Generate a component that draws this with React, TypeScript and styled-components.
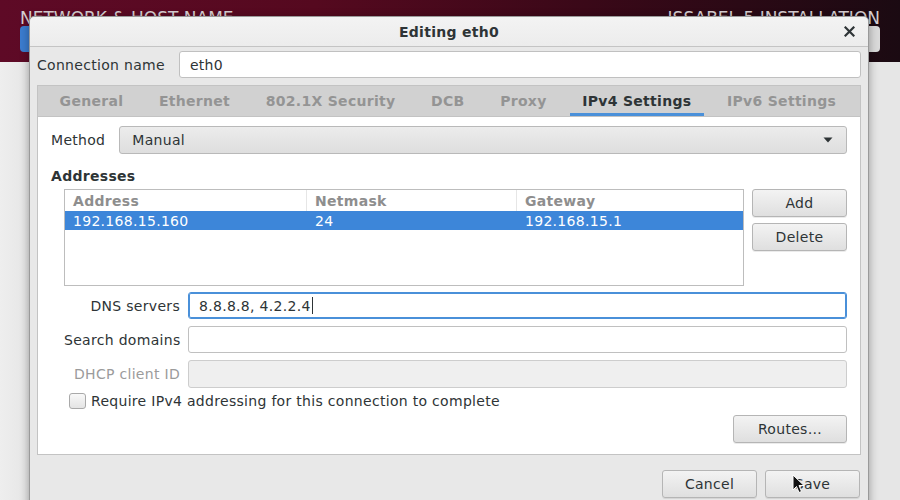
import React from "react";
import styled, { createGlobalStyle } from "styled-components";

const GlobalStyle = createGlobalStyle`
  html, body {
    margin: 0;
    padding: 0;
    width: 900px;
    height: 500px;
    overflow: hidden;
    background: #e9e9e9;
  }
  * { box-sizing: border-box; }
  body {
    font-family: "DejaVu Sans", "Liberation Sans", sans-serif;
    font-size: 14px;
    letter-spacing: 0.3px;
    color: #2e3436;
  }
`;

const Screen = styled.div`
  position: relative;
  width: 900px;
  height: 500px;
  overflow: hidden;
  background: linear-gradient(90deg, #eeeeee 0px, #e6e6e6 28px, #e6e6e6 100%);
`;

/* ---------- installer header behind the dialog ---------- */

const Header = styled.header`
  height: 62px;
  display: flex;
  justify-content: space-between;
  padding: 10px 20px 0 20px;
  background: linear-gradient(90deg, #5e0a26 0%, #55091f 35%, #3a0818 65%, #1b0a12 100%);
`;

const HeaderCol = styled.div<{ $align: "start" | "end" }>`
  display: flex;
  flex-direction: column;
  align-items: ${(p) => (p.$align === "end" ? "flex-end" : "flex-start")};
`;

const HeaderTitle = styled.div`
  font-size: 17px;
  line-height: 16px;
  height: 16px;
  color: #d6cfd2;
  letter-spacing: 0px;
  white-space: nowrap;
`;

const HeaderButton = styled.div<{ $blue?: boolean }>`
  width: 90px;
  height: 26px;
  border-radius: 4px;
  background: ${(p) => (p.$blue ? "#3b7ccf" : "#dadada")};
`;

/* ---------- dialog window ---------- */

const Dialog = styled.div`
  position: absolute;
  left: 29px;
  top: 16px;
  width: 840px;
  height: 500px;
  background: #e8e8e8;
  border: 1px solid #9a9a9a;
  border-radius: 5px 5px 0 0;
  box-shadow: 0 2px 10px rgba(0, 0, 0, 0.35);
  display: flex;
  flex-direction: column;
`;

const TitleBar = styled.div`
  position: relative;
  height: 30px;
  flex: none;
  display: flex;
  align-items: center;
  justify-content: center;
  background: linear-gradient(#f3f3f3, #ececec);
  border-bottom: 1px solid #c4c4c4;
  border-radius: 5px 5px 0 0;
  font-weight: bold;
  font-size: 14px;
`;

const CloseButton = styled.div`
  position: absolute;
  right: 13px;
  top: 9px;
  width: 11px;
  height: 11px;
  display: flex;
`;

const Body = styled.div`
  display: flex;
  flex-direction: column;
  padding: 4px 7px 0 7px;
`;

const ConnRow = styled.div`
  display: flex;
  align-items: center;
  gap: 14px;
`;

const Label = styled.span<{ $muted?: boolean }>`
  white-space: nowrap;
  color: ${(p) => (p.$muted ? "#9b9b9b" : "#2e3436")};
`;

const Entry = styled.div<{ $focused?: boolean; $disabled?: boolean; $h?: number }>`
  flex: 1;
  height: ${(p) => p.$h ?? 27}px;
  display: flex;
  align-items: center;
  padding-left: 10px;
  background: ${(p) => (p.$disabled ? "#efefef" : "#ffffff")};
  border: 1px solid ${(p) => (p.$focused ? "#4a90d9" : p.$disabled ? "#cdcdcd" : "#c0c0c0")};
  box-shadow: ${(p) => (p.$focused ? "inset 0 0 0 1px #4a90d9" : "none")};
  border-radius: 3px;
  white-space: nowrap;
`;

const Caret = styled.span`
  display: inline-block;
  width: 1px;
  height: 17px;
  background: #2e3436;
  margin-left: 1px;
`;

/* ---------- notebook ---------- */

const Notebook = styled.div`
  margin-top: 7px;
  display: flex;
  flex-direction: column;
  border: 1px solid #c3c3c3;
`;

const TabBar = styled.div`
  height: 31px;
  display: flex;
  align-items: stretch;
  padding-left: 4px;
  background: #d1d1d1;
  border-bottom: 1px solid #c3c3c3;
`;

const Tab = styled.div<{ $active?: boolean }>`
  position: relative;
  display: flex;
  align-items: center;
  padding: 0 18px 0 17.6px;
  font-weight: bold;
  white-space: nowrap;
  color: ${(p) => (p.$active ? "#2e3436" : "#949494")};
  &::after {
    content: "";
    display: ${(p) => (p.$active ? "block" : "none")};
    position: absolute;
    left: 5px;
    right: 5px;
    bottom: 0;
    height: 3px;
    background: #4a90d9;
  }
`;

const Panel = styled.div`
  background: #ffffff;
  height: 337px;
  padding: 9px 13px 0 13px;
  display: flex;
  flex-direction: column;
`;

const MethodRow = styled.div`
  display: flex;
  align-items: center;
  gap: 14px;
`;

const Combo = styled.div`
  flex: 1;
  height: 28px;
  display: flex;
  align-items: center;
  justify-content: space-between;
  padding: 0 13px 0 12px;
  background: linear-gradient(#ececec, #dedede);
  border: 1px solid #b9b9b9;
  border-radius: 3px;
`;

const SectionTitle = styled.div`
  font-weight: bold;
  margin-top: 14px;
  height: 17px;
  line-height: 17px;
`;

const AddrArea = styled.div`
  display: flex;
  gap: 8px;
  margin-top: 4px;
  padding-left: 13px;
`;

const Table = styled.div`
  flex: 1;
  height: 97px;
  border: 1px solid #bdbdbd;
  background: #ffffff;
  display: flex;
  flex-direction: column;
`;

const TableRow = styled.div<{ $header?: boolean; $selected?: boolean }>`
  display: grid;
  grid-template-columns: 242px 210px 1fr;
  height: ${(p) => (p.$header ? 21 : 19)}px;
  background: ${(p) => (p.$selected ? "#3d86d9" : "transparent")};
  color: ${(p) => (p.$header ? "#8e8e8e" : p.$selected ? "#ffffff" : "#2e3436")};
  font-weight: ${(p) => (p.$header ? "bold" : "normal")};
`;

const Cell = styled.div<{ $header?: boolean; $last?: boolean }>`
  display: flex;
  align-items: center;
  padding-left: 8px;
  white-space: nowrap;
  border-right: ${(p) => (p.$header && !p.$last ? "1px solid #e6e6e6" : "none")};
`;

const SideButtons = styled.div`
  width: 95px;
  display: flex;
  flex-direction: column;
  gap: 6px;
`;

const Button = styled.div<{ $w?: number }>`
  width: ${(p) => (p.$w ? `${p.$w}px` : "100%")};
  height: 28px;
  display: flex;
  align-items: center;
  justify-content: center;
  background: linear-gradient(#f3f3f3, #dfdfdf);
  border: 1px solid #b5b5b5;
  border-radius: 3px;
  box-shadow: 0 1px 0 rgba(0, 0, 0, 0.08);
  white-space: nowrap;
`;

const Form = styled.div`
  display: grid;
  grid-template-columns: 116px 1fr;
  column-gap: 8px;
  row-gap: 7px;
  align-items: center;
  margin-top: 6px;
  padding-left: 13px;
`;

const FormLabel = styled(Label)`
  text-align: right;
`;

const CheckRow = styled.div`
  display: flex;
  align-items: center;
  gap: 5px;
  margin-top: 5px;
  padding-left: 18px;
`;

const CheckBox = styled.div`
  width: 17px;
  height: 16px;
  border: 1px solid #a9a9a9;
  border-radius: 3px;
  background: linear-gradient(#f8f8f8, #e4e4e4);
`;

const RoutesRow = styled.div`
  display: flex;
  justify-content: flex-end;
  margin-top: 6px;
`;

const Footer = styled.div`
  display: flex;
  justify-content: flex-end;
  gap: 8px;
  margin-top: 15px;
  padding-right: 1px;
`;

const Pointer = styled.svg`
  position: absolute;
  left: 792px;
  top: 474px;
`;

const Arrow = () => (
  <svg width="10" height="6" viewBox="0 0 10 6">
    <path d="M0.5 0.5 L9.5 0.5 L5 5.5 Z" fill="#2e3436" />
  </svg>
);

const CloseIcon = () => (
  <svg width="11" height="11" viewBox="0 0 11 11">
    <path d="M1.5 1.5 L9.5 9.5 M9.5 1.5 L1.5 9.5" stroke="#2e3436" strokeWidth="2.2" strokeLinecap="square" />
  </svg>
);

const tabs = ["General", "Ethernet", "802.1X Security", "DCB", "Proxy", "IPv4 Settings", "IPv6 Settings"];

export default function App() {
  return (
    <>
      <GlobalStyle />
      <Screen>
        <Header>
          <HeaderCol $align="start">
            <HeaderTitle>NETWORK &amp; HOST NAME</HeaderTitle>
            <HeaderButton $blue />
          </HeaderCol>
          <HeaderCol $align="end">
            <HeaderTitle>ISSABEL 5 INSTALLATION</HeaderTitle>
            <HeaderButton />
          </HeaderCol>
        </Header>

        <Dialog>
          <TitleBar>
            Editing eth0
            <CloseButton>
              <CloseIcon />
            </CloseButton>
          </TitleBar>
          <Body>
            <ConnRow>
              <Label>Connection name</Label>
              <Entry>eth0</Entry>
            </ConnRow>

            <Notebook>
              <TabBar>
                {tabs.map((t) => (
                  <Tab key={t} $active={t === "IPv4 Settings"}>
                    {t}
                  </Tab>
                ))}
              </TabBar>
              <Panel>
                <MethodRow>
                  <Label>Method</Label>
                  <Combo>
                    <span>Manual</span>
                    <Arrow />
                  </Combo>
                </MethodRow>

                <SectionTitle>Addresses</SectionTitle>
                <AddrArea>
                  <Table>
                    <TableRow $header>
                      <Cell $header>Address</Cell>
                      <Cell $header>Netmask</Cell>
                      <Cell $header $last>Gateway</Cell>
                    </TableRow>
                    <TableRow $selected>
                      <Cell>192.168.15.160</Cell>
                      <Cell>24</Cell>
                      <Cell>192.168.15.1</Cell>
                    </TableRow>
                  </Table>
                  <SideButtons>
                    <Button>Add</Button>
                    <Button>Delete</Button>
                  </SideButtons>
                </AddrArea>

                <Form>
                  <FormLabel>DNS servers</FormLabel>
                  <Entry $focused>
                    8.8.8.8, 4.2.2.4
                    <Caret />
                  </Entry>
                  <FormLabel>Search domains</FormLabel>
                  <Entry />
                  <FormLabel $muted>DHCP client ID</FormLabel>
                  <Entry $disabled $h={28} />
                </Form>

                <CheckRow>
                  <CheckBox />
                  <Label>Require IPv4 addressing for this connection to complete</Label>
                </CheckRow>

                <RoutesRow>
                  <Button $w={114}>Routes…</Button>
                </RoutesRow>
              </Panel>
            </Notebook>

            <Footer>
              <Button $w={95}>Cancel</Button>
              <Button $w={95}>Save</Button>
            </Footer>
          </Body>
        </Dialog>

        <Pointer width="13" height="20" viewBox="0 0 13 20">
          <path
            d="M1 1 L1 16 L4.5 12.5 L7 18.5 L9.5 17.5 L7 11.5 L12 11.5 Z"
            fill="#111111"
            stroke="#ffffff"
            strokeWidth="1"
            strokeLinejoin="round"
          />
        </Pointer>
      </Screen>
    </>
  );
}
